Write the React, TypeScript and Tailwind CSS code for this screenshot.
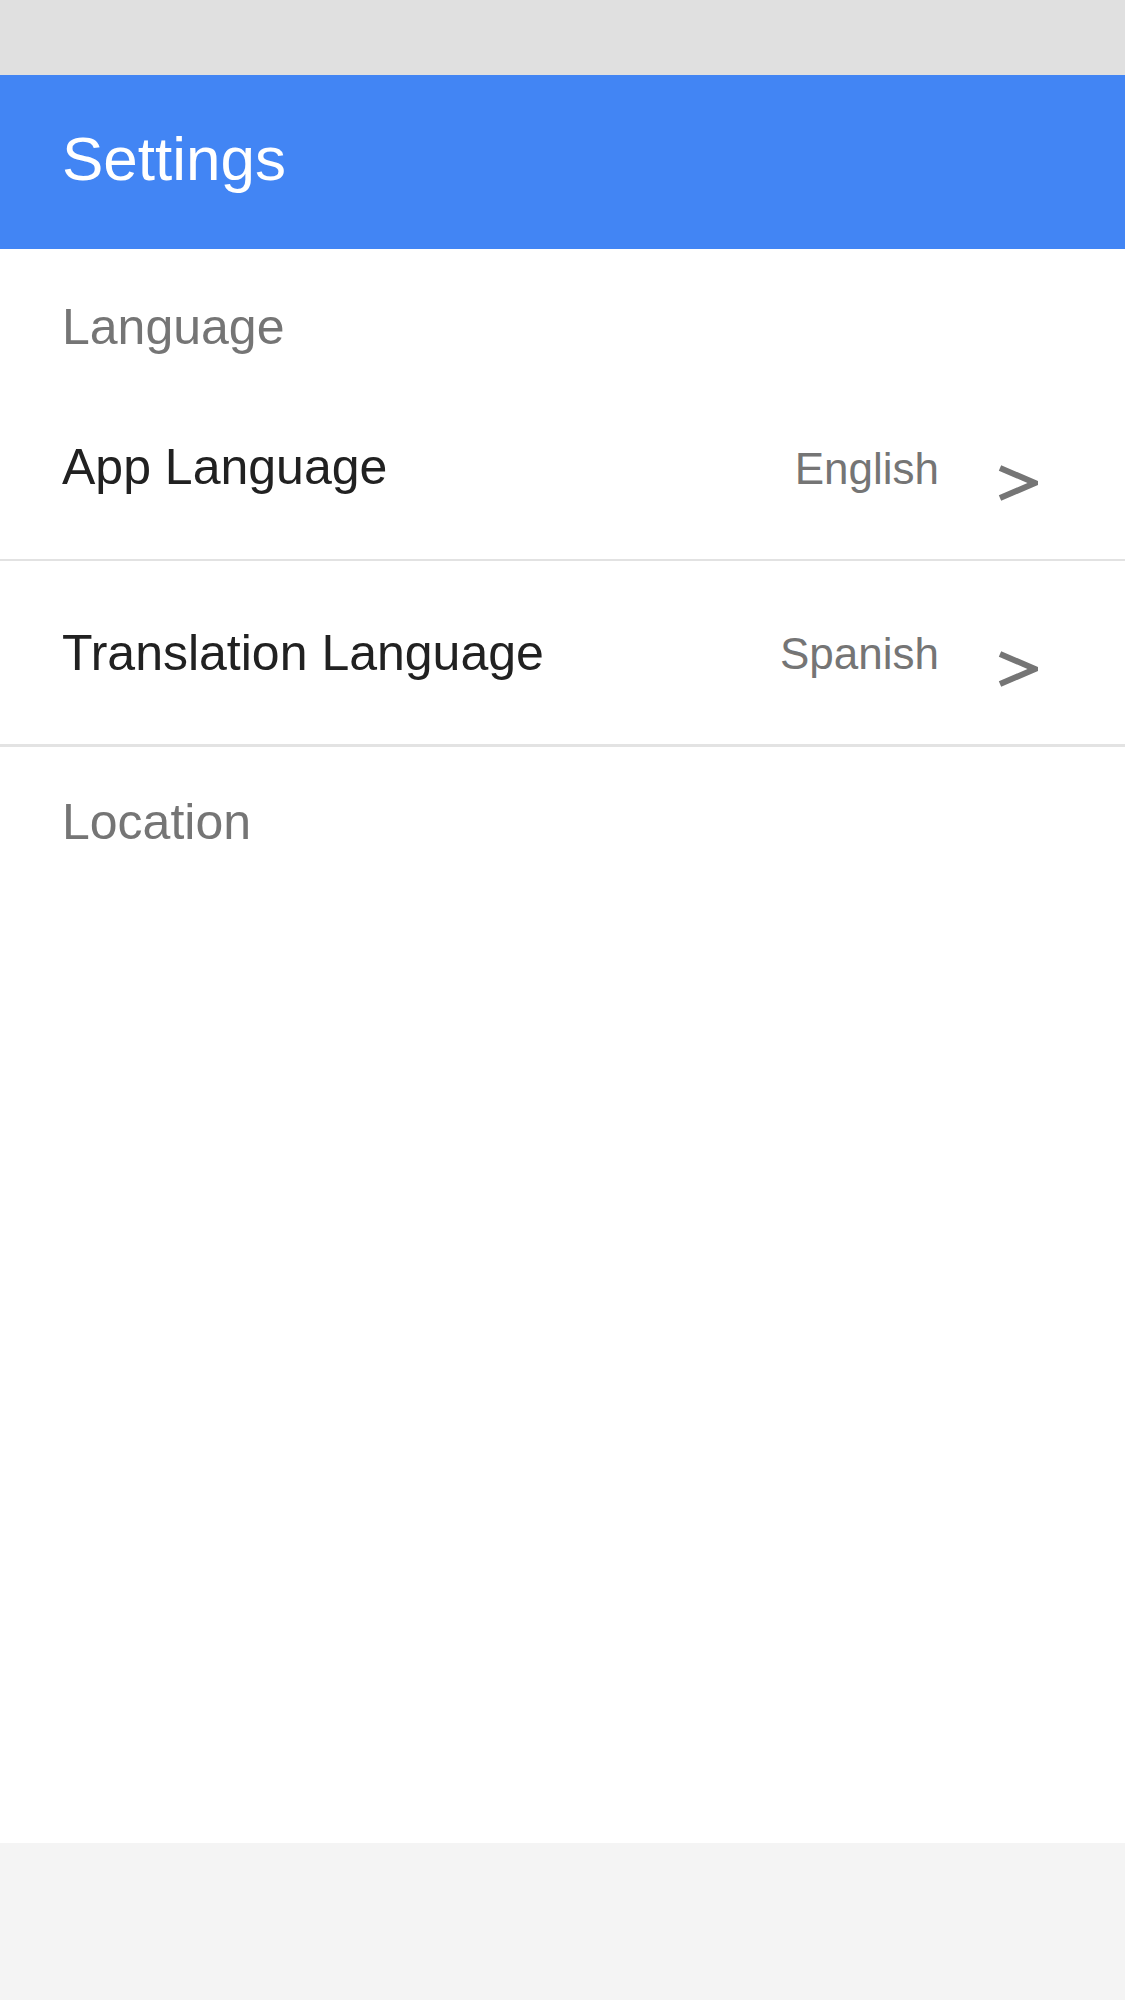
const font = { fontFamily: '"Liberation Sans", Arial, sans-serif' }

function Chevron() {
  return (
    <svg width="40" height="36" viewBox="0 0 40 36" className="mt-[32px] shrink-0">
      <polyline
        points="2,3 37,18 2,33"
        fill="none"
        stroke="#757575"
        strokeWidth="6"
        strokeLinejoin="miter"
        strokeLinecap="butt"
      />
    </svg>
  )
}

function SettingRow({ label, value, last }: { label: string; value: string; last?: boolean }) {
  return (
    <div
      className={
        last
          ? "flex h-[186px] items-center border-b-[3px] border-[#e3e3e3] pl-[62px] pr-[87px]"
          : "flex h-[186px] items-center border-b-2 border-[#e2e2e2] pl-[62px] pr-[87px]"
      }
    >
      <span className="flex-1 text-[50px] leading-none text-[#212121]">{label}</span>
      <span className="mt-[3px] text-[44px] leading-none text-[#757575]">{value}</span>
      <div className="ml-[59px] flex">
        <Chevron />
      </div>
    </div>
  )
}

export default function App() {
  return (
    <div className="flex min-h-[2000px] w-[1125px] flex-col bg-[#f4f4f4]" style={font}>
      <div className="h-[75px] bg-[#e0e0e0]" />
      <div className="h-[174px] bg-[#4285f4] pl-[62px] pt-[53px]">
        <h1 className="text-[62px] leading-none text-white">Settings</h1>
      </div>
      <div className="h-[1594px] bg-white">
        <div className="h-[126px] pl-[62px] pt-[53px]">
          <p className="text-[50px] leading-none text-[#757575]">Language</p>
        </div>
        <SettingRow label="App Language" value="English" />
        <SettingRow label="Translation Language" value="Spanish" last />
        <div className="pl-[62px] pt-[50px]">
          <p className="text-[50px] leading-none text-[#757575]">Location</p>
        </div>
      </div>
      <div className="flex-1 bg-[#f4f4f4]" />
    </div>
  )
}
